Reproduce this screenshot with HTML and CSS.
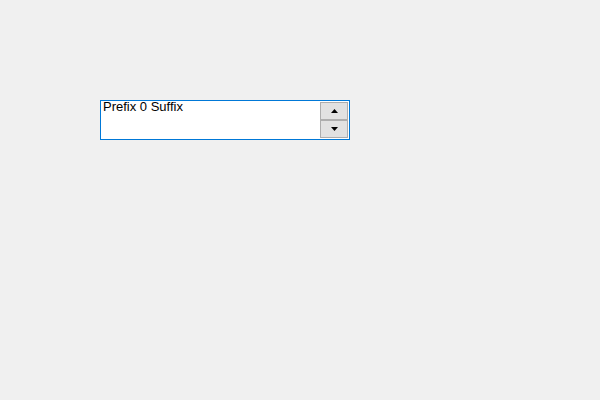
FILE: index.html
```html
<!DOCTYPE html>
<html>
<head>
<link rel="stylesheet" href="styles.css">
</head>
<body>
<div class="spin">
  <div class="field"><div class="clip"><span class="text">Prefix 0 Suffix</span></div></div>
  <div class="buttons">
    <div class="btn"><svg width="7" height="4" viewBox="0 0 7 4"><path d="M3.5 0 L7 4 L0 4 Z" fill="#000"/></svg></div>
    <div class="btn"><svg width="7" height="4" viewBox="0 0 7 4"><path d="M0 0 L7 0 L3.5 4 Z" fill="#000"/></svg></div>
  </div>
</div>
</body>
</html>
```
FILE: styles.css
```css
html, body {
  margin: 0;
  padding: 0;
  background: #f0f0f0;
  width: 600px;
  height: 400px;
}
body {
  padding: 100px 0 0 100px;
  box-sizing: border-box;
}
.spin {
  width: 250px;
  height: 40px;
  box-sizing: border-box;
  border: 1px solid #0078d7;
  background: #fff;
  display: flex;
}
.field {
  flex: 1;
  padding-left: 2px;
}
.clip {
  height: 12px;
  overflow: hidden;
}
.text {
  display: block;
  font-family: "Liberation Sans", Arial, sans-serif;
  font-size: 13px;
  line-height: 13px;
  margin-top: -1px;
  color: #000;
  white-space: nowrap;
}
.buttons {
  width: 28px;
  display: flex;
  flex-direction: column;
  padding: 1px 1px 1px 0;
}
.btn {
  flex: 1;
  background: #e1e1e1;
  border: 1px solid #adadad;
  display: flex;
  align-items: center;
  justify-content: center;
}
.btn + .btn {
  border-top: 1px solid #adadad;
}
```
